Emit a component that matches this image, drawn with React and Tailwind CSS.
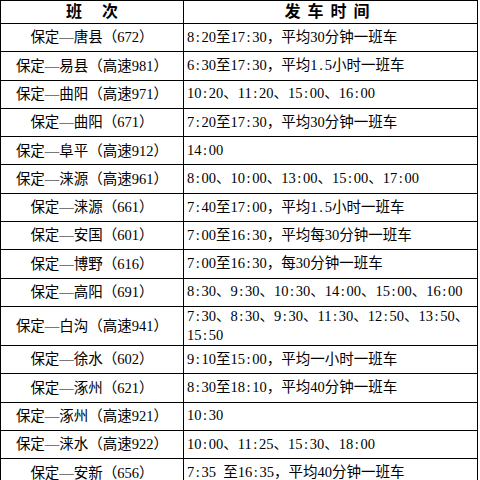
import React from 'react';

const rows = [
  ['保定—唐县（672）', '8:20至17:30，平均30分钟一班车'],
  ['保定—易县（高速981）', '6:30至17:30，平均1.5小时一班车'],
  ['保定—曲阳（高速971）', '10:20、11:20、15:00、16:00'],
  ['保定—曲阳（671）', '7:20至17:30，平均30分钟一班车'],
  ['保定—阜平（高速912）', '14:00'],
  ['保定—涞源（高速961）', '8:00、10:00、13:00、15:00、17:00'],
  ['保定—涞源（661）', '7:40至17:00，平均1.5小时一班车'],
  ['保定—安国（601）', '7:00至16:30，平均每30分钟一班车'],
  ['保定—博野（616）', '7:00至16:30，每30分钟一班车'],
  ['保定—高阳（691）', '8:30、9:30、10:30、14:00、15:00、16:00'],
  ['保定—白沟（高速941）', ['7:30、8:30、9:30、11:30、12:50、13:50、', '15:50']],
  ['保定—徐水（602）', '9:10至15:00，平均一小时一班车'],
  ['保定—涿州（621）', '8:30至18:10，平均40分钟一班车'],
  ['保定—涿州（高速921）', '10:30'],
  ['保定—涞水（高速922）', '10:00、11:25、15:30、18:00'],
  ['保定—安新（656）', '7:35 至16:35，平均40分钟一班车'],
];

const font = { fontFamily: '"Liberation Serif", "Noto Sans CJK SC", serif' };

// colons, dots and spaces are half-width in the original song-style font
const Half = ({ text }) =>
  text.split(/([:. ])/).map((part, i) =>
    part === ':' || part === ' ' || part === '.' ? (
      <span key={i} className="inline-block w-[0.5em] text-center">
        {part === ' ' ? '\u00a0' : part}
      </span>
    ) : (
      <React.Fragment key={i}>{part}</React.Fragment>
    )
  );

export default function App() {
  return (
    <div className="w-[480px] h-[480px] overflow-hidden bg-white text-black" style={font}>
      <table className="w-[478px] table-fixed border-collapse">
        <colgroup>
          <col className="w-[183px]" />
          <col />
        </colgroup>
        <thead>
          <tr className="h-[23px]">
            <th className="border border-black p-0 text-[16px] font-bold leading-none">
              班<span className="inline-block w-[20px]" />次
            </th>
            <th className="border border-black p-0 text-[16px] font-bold leading-none tracking-[7px]">
              发车时间
            </th>
          </tr>
        </thead>
        <tbody>
          {rows.map(([route, times]) => {
            const wrapped = Array.isArray(times);
            return (
              <tr key={route} className={wrapped ? 'h-[39px]' : 'h-[28.3px]'}>
                <td className="border border-black p-0 text-center text-[14.5px] leading-none whitespace-nowrap">
                  {route}
                </td>
                <td className="border border-black py-0 pl-[3px] pr-0 text-[14.5px] whitespace-nowrap">
                  {wrapped ? (
                    <div className="leading-[19px]">
                      <div><Half text={times[0]} /></div>
                      <div><Half text={times[1]} /></div>
                    </div>
                  ) : (
                    <span className="leading-none"><Half text={times} /></span>
                  )}
                </td>
              </tr>
            );
          })}
        </tbody>
      </table>
    </div>
  );
}
